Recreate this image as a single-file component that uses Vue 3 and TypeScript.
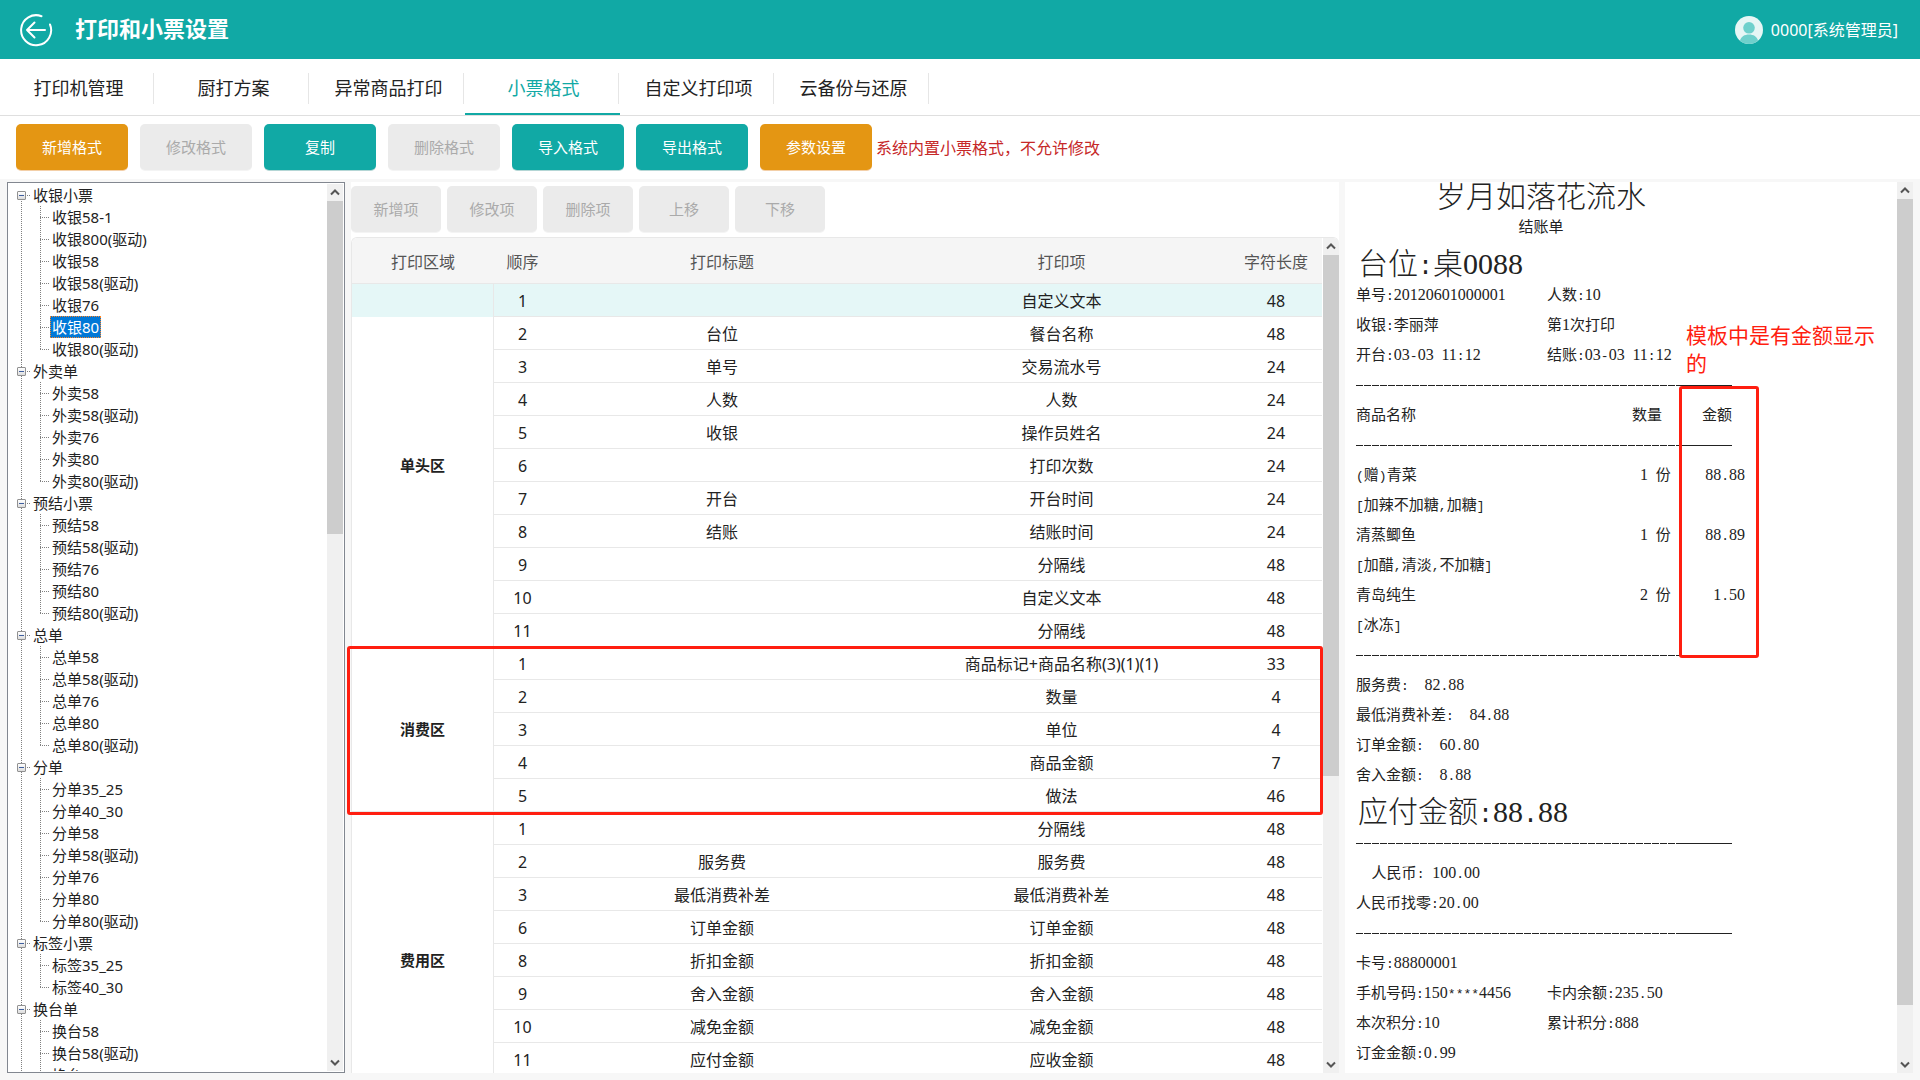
<script setup lang="ts">
import { h, ref } from 'vue'

interface TreeGroup { name: string; items: string[] }
interface ActionButton { label: string; tone: 'primary' | 'warn' | 'off' }
interface GridRow { no: string; title: string; item: string; len: string }
interface Area { name: string; rows: GridRow[] }
interface Dish { name: string; qty: string; amount: string; note: string }

const tabs: string[] = ['打印机管理', '厨打方案', '异常商品打印', '小票格式', '自定义打印项', '云备份与还原']
const activeTab = ref('小票格式')

const actions: ActionButton[] = [
  { label: '新增格式', tone: 'warn' },
  { label: '修改格式', tone: 'off' },
  { label: '复制', tone: 'primary' },
  { label: '删除格式', tone: 'off' },
  { label: '导入格式', tone: 'primary' },
  { label: '导出格式', tone: 'primary' },
  { label: '参数设置', tone: 'warn' },
]
const itemActions: string[] = ['新增项', '修改项', '删除项', '上移', '下移']

const selected = ref('收银80')
const tree: TreeGroup[] = [
  { name: '收银小票', items: ['收银58-1', '收银800(驱动)', '收银58', '收银58(驱动)', '收银76', '收银80', '收银80(驱动)'] },
  { name: '外卖单', items: ['外卖58', '外卖58(驱动)', '外卖76', '外卖80', '外卖80(驱动)'] },
  { name: '预结小票', items: ['预结58', '预结58(驱动)', '预结76', '预结80', '预结80(驱动)'] },
  { name: '总单', items: ['总单58', '总单58(驱动)', '总单76', '总单80', '总单80(驱动)'] },
  { name: '分单', items: ['分单35_25', '分单40_30', '分单58', '分单58(驱动)', '分单76', '分单80', '分单80(驱动)'] },
  { name: '标签小票', items: ['标签35_25', '标签40_30'] },
  { name: '换台单', items: ['换台58', '换台58(驱动)', '换台76'] },
]

const row = (no: string, title: string, item: string, len: string): GridRow => ({ no, title, item, len })
const areas: Area[] = [
  {
    name: '单头区',
    rows: [
      row('1', '', '自定义文本', '48'),
      row('2', '台位', '餐台名称', '48'),
      row('3', '单号', '交易流水号', '24'),
      row('4', '人数', '人数', '24'),
      row('5', '收银', '操作员姓名', '24'),
      row('6', '', '打印次数', '24'),
      row('7', '开台', '开台时间', '24'),
      row('8', '结账', '结账时间', '24'),
      row('9', '', '分隔线', '48'),
      row('10', '', '自定义文本', '48'),
      row('11', '', '分隔线', '48'),
    ],
  },
  {
    name: '消费区',
    rows: [
      row('1', '', '商品标记+商品名称(3)(1)(1)', '33'),
      row('2', '', '数量', '4'),
      row('3', '', '单位', '4'),
      row('4', '', '商品金额', '7'),
      row('5', '', '做法', '46'),
    ],
  },
  {
    name: '费用区',
    rows: [
      row('1', '', '分隔线', '48'),
      row('2', '服务费', '服务费', '48'),
      row('3', '最低消费补差', '最低消费补差', '48'),
      row('6', '订单金额', '订单金额', '48'),
      row('8', '折扣金额', '折扣金额', '48'),
      row('9', '舍入金额', '舍入金额', '48'),
      row('10', '减免金额', '减免金额', '48'),
      row('11', '应付金额', '应收金额', '48'),
      row('', '', '', ''),
    ],
  },
]

const heads: [string, string][] = [
  ['单号:20120601000001', '人数:10'],
  ['收银:李丽萍', '第1次打印'],
  ['开台:03-03 11:12', '结账:03-03 11:12'],
]
const dishes: Dish[] = [
  { name: '(赠)青菜', qty: '1 份', amount: '88.88', note: '[加辣不加糖,加糖]' },
  { name: '清蒸鲫鱼', qty: '1 份', amount: '88.89', note: '[加醋,清淡,不加糖]' },
  { name: '青岛纯生', qty: '2 份', amount: '1.50', note: '[冰冻]' },
]
const fees: string[] = ['服务费:  82.88', '最低消费补差:  84.88', '订单金额:  60.80', '舍入金额:  8.88']
const pays: string[] = ['  人民币: 100.00', '人民币找零:20.00']
const member: [string, string][] = [
  ['卡号:88800001', ''],
  ['手机号码:150****4456', '卡内余额:235.50'],
  ['本次积分:10', '累计积分:888'],
  ['订金金额:0.99', ''],
]

// Receipt text: digits and half-width signs each take half of a full-width cell.
const Txt = (props: { t: string }) =>
  h('span', { class: 'txt' }, (props.t.match(/\d+|[ -/:-~]+|[^ -~]+/g) ?? []).map((part) =>
    /^\d/.test(part) ? h('span', { class: 'num' }, part)
      : /^[ -~]/.test(part) ? h('span', { class: 'half' }, part) : part))
Txt.props = ['t']
</script>

<template>
  <div class="page">
    <header class="top">
      <button class="back" aria-label="返回">
        <svg width="34" height="34" viewBox="0 0 34 34" fill="none" stroke="#fff" stroke-width="2" stroke-linecap="round" stroke-linejoin="round">
          <path d="M22.5 3.2A15 15 0 1 0 31 11.5" />
          <path d="M26 17H8M15.5 9.5 8 17l7.5 7.5" />
        </svg>
      </button>
      <h1>打印和小票设置</h1>
      <div class="user">
        <svg width="28" height="28" viewBox="0 0 28 28">
          <circle cx="14" cy="14" r="14" fill="#e7f6f5" />
          <circle cx="14" cy="11.8" r="5.8" fill="#6fd0cc" />
          <path d="M5 24.7C6 20.500 9.500 18.500 14 18.500s8 2 9 6.200A14 14 0 0 1 5 24.700Z" fill="#6fd0cc" />
        </svg>
        <span>0000[系统管理员]</span>
      </div>
    </header>

    <nav class="tabs">
      <button v-for="t in tabs" :key="t" class="tab" :class="{ on: t === activeTab }" @click="activeTab = t">
        <span>{{ t }}</span>
      </button>
    </nav>

    <div class="toolbar">
      <button v-for="a in actions" :key="a.label" class="btn" :class="a.tone" :disabled="a.tone === 'off'">{{ a.label }}</button>
      <p class="warning">系统内置小票格式，不允许修改</p>
    </div>

    <main class="panels">
      <aside class="tree">
        <ul class="groups">
          <li v-for="g in tree" :key="g.name" class="group">
            <div class="root">
              <button class="toggle" :aria-label="'折叠' + g.name"></button>
              <span>{{ g.name }}</span>
            </div>
            <ul class="leaves">
              <li v-for="i in g.items" :key="i" class="leaf">
                <button class="node" :class="{ sel: i === selected }" @click="selected = i">{{ i }}</button>
              </li>
            </ul>
          </li>
        </ul>
        <div class="bar">
          <svg class="arrow" viewBox="0 0 16 17"><path d="M4 10.500 8 6.500l4 4" /></svg>
          <div class="track"><div class="thumb" style="height: 39%"></div></div>
          <svg class="arrow" viewBox="0 0 16 17"><path d="M4 6.500 8 10.500l4-4" /></svg>
        </div>
      </aside>

      <section class="middle">
        <div class="item-actions">
          <button v-for="a in itemActions" :key="a" class="btn off small" disabled>{{ a }}</button>
        </div>
        <div class="grid-box">
          <div class="grid-scroll">
            <table class="grid">
              <colgroup>
                <col class="c-area" /><col class="c-no" /><col class="c-title" /><col /><col class="c-len" />
              </colgroup>
              <thead>
                <tr><th>打印区域</th><th>顺序</th><th>打印标题</th><th>打印项</th><th>字符长度</th></tr>
              </thead>
              <tbody v-for="(a, ai) in areas" :key="a.name">
                <tr v-for="(r, ri) in a.rows" :key="ri" :class="{ cur: ai === 0 && ri === 0 }">
                  <td v-if="ri === 0" class="area" :rowspan="a.rows.length">{{ a.name }}</td>
                  <td>{{ r.no }}</td>
                  <td>{{ r.title }}</td>
                  <td>{{ r.item }}</td>
                  <td>{{ r.len }}</td>
                </tr>
              </tbody>
            </table>
          </div>
          <div class="bar">
            <svg class="arrow" viewBox="0 0 16 17"><path d="M4 10.500 8 6.500l4 4" /></svg>
            <div class="track"><div class="thumb" style="height: 65%"></div></div>
            <svg class="arrow" viewBox="0 0 16 17"><path d="M4 6.500 8 10.500l4-4" /></svg>
          </div>
        </div>
        <div class="mark mark-area"></div>
      </section>

      <section class="preview">
        <div class="receipt">
          <div class="center title">岁月如落花流水</div>
          <div class="center line">结账单</div>
          <div class="big"><Txt t="台位:桌0088" /></div>
          <div v-for="p in heads" :key="p[0]" class="line pair"><Txt :t="p[0]" /><Txt :t="p[1]" /></div>
          <hr class="dash" />
          <table class="dishes">
            <colgroup><col class="d-name" /><col class="d-qty" /><col class="d-amt" /></colgroup>
            <thead>
              <tr><th>商品名称</th><th>数量</th><th>金额</th></tr>
              <tr><td colspan="3"><hr class="dash" /></td></tr>
            </thead>
            <tbody v-for="d in dishes" :key="d.name">
              <tr>
                <td><Txt :t="d.name" /></td>
                <td class="qty"><Txt :t="d.qty" /></td>
                <td class="amt"><Txt :t="d.amount" /></td>
              </tr>
              <tr><td colspan="3"><Txt :t="d.note" /></td></tr>
            </tbody>
          </table>
          <hr class="dash" />
          <div v-for="f in fees" :key="f" class="line"><Txt :t="f" /></div>
          <div class="big"><Txt t="应付金额:88.88" /></div>
          <hr class="dash" />
          <div v-for="f in pays" :key="f" class="line"><Txt :t="f" /></div>
          <hr class="dash" />
          <div v-for="p in member" :key="p[0]" class="line pair"><Txt :t="p[0]" /><Txt :t="p[1]" /></div>
        </div>
        <div class="bar">
          <svg class="arrow" viewBox="0 0 16 17"><path d="M4 10.500 8 6.500l4 4" /></svg>
          <div class="track"><div class="thumb" style="height: 94%"></div></div>
          <svg class="arrow" viewBox="0 0 16 17"><path d="M4 6.500 8 10.500l4-4" /></svg>
        </div>
        <p class="remark">模板中是有金额显示的</p>
        <div class="mark mark-amount"></div>
      </section>
    </main>
  </div>
</template>

<style>
body { margin: 0; background: #f7f7f7; }
</style>

<style scoped>
.page {
  height: 100vh;
  display: flex;
  flex-direction: column;
  background: #f7f7f7;
  color: #222;
  font-family: "Noto Sans", "Noto Sans CJK SC", sans-serif;
  font-size: 16px;
  overflow: hidden;
}
button { font-family: inherit; border: 0; padding: 0; margin: 0; background: none; color: inherit; }
ul { list-style: none; margin: 0; padding: 0; }
p { margin: 0; }

.top {
  height: 59px;
  flex: none;
  display: flex;
  align-items: center;
  background: #11a9a5;
  color: #fff;
  padding: 0 22px 0 19px;
}
.back { width: 34px; height: 34px; }
.back svg { display: block; }
.top h1 { margin: 0 0 3px 22px; font-size: 22px; line-height: 30px; font-weight: 700; }
.user { margin-left: auto; display: flex; align-items: center; gap: 8px; line-height: 24px; }

.tabs {
  height: 56px;
  flex: none;
  display: flex;
  background: #fff;
  border-bottom: 1px solid #dfdfdf;
}
.tab { width: 155px; position: relative; font-size: 18px; padding: 2px 1px 0 2px; }
.tab span { display: block; line-height: 31px; padding-left: 2px; border-right: 1px solid #e6e6e6; }
.tab.on { color: #11a9a5; }
.tab.on::after {
  content: "";
  position: absolute;
  left: 0;
  right: 0;
  bottom: 0;
  height: 2px;
  background: #11a9a5;
}

.toolbar {
  flex: none;
  display: flex;
  align-items: center;
  gap: 12px;
  padding: 8px 16px 9px;
  background: #fff;
}
.btn { width: 112px; height: 46px; padding-bottom: 2px; border-radius: 5px; font-size: 15px; color: #fff; }
.btn.warn { background: #e49613; box-shadow: 0 1px 0 #f3cfa8; }
.btn.primary { background: #11a9a5; box-shadow: 0 1px 0 #b4d6d5; }
.btn.off { background: #ebebeb; color: #aaa; box-shadow: 0 1px 0 #f4f4f4; }
.btn.small { width: 90px; }
.warning { color: #c62828; margin-left: -8px; padding-top: 2px; line-height: 24px; }

.panels {
  flex: 1;
  min-height: 0;
  display: flex;
  gap: 6px;
  padding: 3px 7px 7px;
}

.bar { width: 16px; flex: none; display: flex; flex-direction: column; background: #f0f0f0; }
.arrow { width: 16px; height: 17px; flex: none; fill: none; stroke: #555; stroke-width: 2; }
.track { flex: 1; }
.thumb { background: #cdcdcd; }

.tree {
  width: 338px;
  box-sizing: border-box;
  border: 1px solid #828790;
  background: #fff;
  display: flex;
  padding: 1px;
  overflow: hidden;
}
.groups { flex: 1; font-size: 15px; line-height: 22px; overflow: hidden; }
.group {
  background: repeating-linear-gradient(#808080 0 1px, transparent 1px 2px) 12px 0 / 1px 100% no-repeat;
}
.group:first-child { background-position: 12px 11px; }
.root { display: flex; align-items: center; height: 22px; padding-left: 8px; }
.root span {
  padding-left: 7px;
  background: repeating-linear-gradient(90deg, #808080 0 1px, transparent 1px 2px) 1px 11px / 4px 1px no-repeat;
}
.toggle {
  width: 9px;
  height: 9px;
  border: 1px solid #919191;
  border-radius: 1px;
  background: linear-gradient(#3f5f9f, #3f5f9f) 1px 3px / 5px 1px no-repeat, linear-gradient(#fff, #ddd);
}
.leaves { margin-left: 31px; }
.leaf {
  height: 22px;
  display: flex;
  padding-left: 10px;
  background:
    repeating-linear-gradient(#808080 0 1px, transparent 1px 2px) 0 0 / 1px 100% no-repeat,
    repeating-linear-gradient(90deg, #808080 0 1px, transparent 1px 2px) 0 11px / 9px 1px no-repeat;
}
.leaf:last-child { background-size: 1px 11px, 9px 1px; }
.group:last-child .leaf { background-size: 1px 100%, 9px 1px; }
.node { font-size: 15px; line-height: 20px; border: 1px solid transparent; padding: 0 1px; }
.node.sel { background: #0078d7; color: #fff; border: 1px dotted #ff8728; }

.middle {
  flex: 1;
  min-width: 0;
  position: relative;
  background: #fff;
  display: flex;
  flex-direction: column;
}
.item-actions { display: flex; gap: 6px; padding: 4px 0 5px; }
.grid-box {
  flex: 1;
  min-height: 0;
  display: flex;
  gap: 1px;
  border: 1px solid #e8e8e8;
  border-width: 1px 0 0 1px;
  border-radius: 6px 6px 0 0;
  overflow: hidden;
}
.grid-scroll { flex: 1; min-width: 0; overflow: hidden; }
.grid { width: 100%; table-layout: fixed; border-collapse: separate; border-spacing: 0; text-align: center; }
.c-area { width: 142px; }
.c-no { width: 57px; }
.c-title { width: 342px; }
.c-len { width: 92px; }
.grid th {
  height: 45px;
  padding: 0;
  font-weight: 400;
  color: #555;
  background: #f5f5f5;
  border-bottom: 1px solid #e8e8e8;
}
.grid td { height: 30px; padding: 2px 0 0; line-height: 24px; border-bottom: 1px solid #e8e8e8; }
.grid td.area { font-size: 15px; font-weight: 700; padding: 0; border-right: 1px solid #e8e8e8; }
.cur td { background: #e5f7f7; }
.cur td.area { background: linear-gradient(#e5f7f7, #e5f7f7) 0 0 / 100% 33px no-repeat; }

.mark { position: absolute; border: 3px solid #ff1e10; border-radius: 3px; box-sizing: border-box; pointer-events: none; }
.mark-area { left: -4px; right: 16px; top: 464px; height: 169px; }
.mark-amount { left: 334px; top: 204px; width: 80px; height: 272px; }
.remark { position: absolute; left: 341px; top: 139px; width: 190px; font-size: 21px; line-height: 28px; color: #ff1e10; }

.preview { width: 568px; position: relative; display: flex; background: #fff; }
.receipt {
  flex: 1;
  padding: 2px 0 0 11px;
  font-family: "Liberation Mono", "Noto Sans CJK SC", monospace;
  font-size: 15px;
  line-height: 30px;
  overflow: hidden;
}
.txt { white-space: pre; }
.txt :deep(.half) { font-size: 13px; line-height: 0; }
.txt :deep(.num) { font-family: "Liberation Serif", serif; font-size: 16px; line-height: 0; }
.center { width: 370px; text-align: center; }
.title { font-size: 30px; font-weight: 300; }
.line { height: 30px; }
.pair { display: grid; grid-template-columns: 191px 1fr; }
.big { font-size: 30px; line-height: 31px; height: 31px; padding: 7px 0 0 2px; font-weight: 300; }
.big :deep(.half) { font-size: 25px; }
.big :deep(.num) { font-size: 30px; }
.dash {
  width: 376px;
  height: 1px;
  margin: 0;
  padding: 13px 0 16px;
  border: 0;
  background-image: repeating-linear-gradient(90deg, #222 0 7px, transparent 7px 8px), linear-gradient(#222, #222);
  background-size: 320px 1px, 56px 1px;
  background-position: 0 13px, 320px 13px;
  background-repeat: no-repeat;
}
.dishes { width: 389px; table-layout: fixed; border-collapse: collapse; }
.dishes th, .dishes td { height: 30px; padding: 0; font-weight: 400; text-align: left; line-height: 30px; }
.d-name { width: 276px; }
.d-qty { width: 70px; }
.d-amt { width: 43px; }
.dishes td.qty { padding-left: 8px; }
.dishes td.amt { text-align: right; }
</style>
